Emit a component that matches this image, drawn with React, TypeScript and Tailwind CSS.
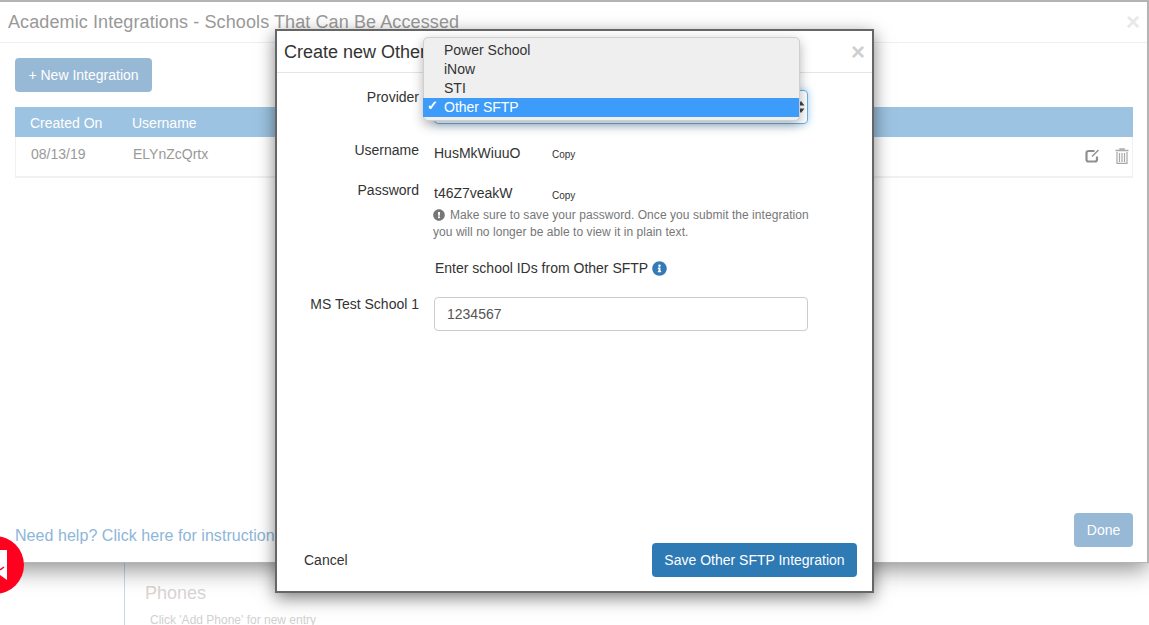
import { FaExclamationCircle, FaInfoCircle } from "react-icons/fa";

const providers = ["Power School", "iNow", "STI", "Other SFTP"];

function EditIcon() {
  return (
    <svg width="15" height="15" viewBox="0 0 15 15" fill="none" className="text-[#8f8f8f]">
      <path d="M9.5 3H3.5A2 2 0 0 0 1.5 5v6.5a2 2 0 0 0 2 2H10a2 2 0 0 0 2-2V8.5" stroke="currentColor" strokeWidth="2.2" />
      <path d="M7 8.5 13.5 2" stroke="currentColor" strokeWidth="1.5" />
    </svg>
  );
}

function TrashIcon() {
  return (
    <svg width="14" height="16" viewBox="0 0 14 16" fill="none" className="text-[#a8a8a8]">
      <path d="M5 2V.8H9V2M0.5 2.5H13.5" stroke="currentColor" strokeWidth="1.3" />
      <path d="M2 4V15.3H12V4" stroke="currentColor" strokeWidth="1.2" />
      <path d="M4.5 5V14M7 5V14M9.5 5V14" stroke="currentColor" strokeWidth="1.2" />
    </svg>
  );
}

function Field({ label, value, top, copyTop }: { label: string; value: string; top: string; copyTop: string }) {
  return (
    <div className={`flex ${top}`}>
      <div className="w-[142px] text-right text-sm leading-5 text-[#333]">{label}</div>
      <div className="ml-[15px] w-[118px] pt-[3px] text-sm leading-5 text-[#333]">{value}</div>
      <div className={`${copyTop} text-[10px] leading-5 text-[#333]`}>Copy</div>
    </div>
  );
}

export default function App() {
  return (
    <div className="relative h-[625px] w-[1149px] overflow-hidden bg-white font-['Liberation_Sans',Arial,sans-serif]">
      {/* back modal */}
      <div className="relative z-10 flex h-[563px] flex-col border-t-2 border-r-2 border-b border-[#b4b4b4] bg-white shadow-[0_6px_22px_rgba(0,0,0,0.45)]">
        <div className="flex h-[41px] shrink-0 items-center justify-between border-b border-[#efefef] pr-[7px] pl-2">
          <h1 className="text-lg leading-5 tracking-[0.1px] text-[#999]">Academic Integrations - Schools That Can Be Accessed</h1>
          <span className="text-[24px] leading-none font-bold text-[#e8e8e8]">×</span>
        </div>
        <div className="flex flex-1 flex-col pt-[15px] pr-[14px] pl-[15px]">
          <button className="h-[34px] w-[137px] rounded bg-[#97b9d6] text-sm font-normal text-white">+ New Integration</button>
          <div className="mt-[15px] flex h-[30px] items-center bg-[#9cc3e1] pt-[2px] text-sm text-white">
            <span className="ml-[15px] w-[102px]">Created On</span>
            <span>Username</span>
          </div>
          <div className="flex h-[41px] items-center border-x border-b-2 border-[#f1f1f1] pb-[6px] text-sm text-[#999]">
            <span className="ml-[15px] w-[102px]">08/13/19</span>
            <span>ELYnZcQrtx</span>
            <div className="mt-[4px] mr-[3px] ml-auto flex items-center gap-[15px]">
              <EditIcon />
              <TrashIcon />
            </div>
          </div>
          <div className="mt-auto flex items-start justify-between pb-[15px]">
            <a className="mt-[13px] text-base leading-5 tracking-[0.05px] text-[#8db6d8]">Need help? Click here for instructions</a>
            <button className="h-[34px] w-[59px] rounded bg-[#97b9d6] text-sm text-white">Done</button>
          </div>
        </div>
      </div>

      {/* page behind the modals */}
      <div className="ml-[124px] h-[62px] border-l border-[#c4d9ea] pt-5 pl-5">
        <div className="text-lg leading-5 text-[#d8d4d2]">Phones</div>
        <div className="mt-[9px] ml-[5px] text-xs leading-4 text-[#d0d0d0]">Click 'Add Phone' for new entry</div>
      </div>

      {/* chat bubble */}
      <div className="absolute top-[536px] left-[-34px] z-20 flex h-[58px] w-[58px] items-center justify-end rounded-full bg-[#ff001f] pr-[17px]">
        <svg width="7" height="30" viewBox="0 0 7 30">
          <path d="M0 0H7V30L0 25Z" fill="#fff" />
          <path d="M0 20 4 17" stroke="#ff001f" strokeWidth="1.5" />
        </svg>
      </div>

      {/* create integration modal */}
      <div className="absolute top-[29px] left-[275px] z-30 flex h-[564px] w-[599px] flex-col border-2 border-[#666] bg-white shadow-[0_5px_16px_rgba(0,0,0,0.5)]">
        <div className="flex h-[42px] shrink-0 items-center justify-between border-b border-[#e5e5e5] pr-[7px] pl-[7px]">
          <h2 className="text-lg leading-5 text-[#333]">Create new Other SFTP Integration</h2>
          <span className="text-[24px] leading-none font-bold text-[#cfcfcf]">×</span>
        </div>

        <div className="flex-1">
          <div className="flex pt-[14px]">
            <div className="w-[142px] text-right text-sm leading-5 text-[#333]">Provider</div>
            <div className="mt-[3px] ml-[15px] flex h-[34px] w-[374px] items-center justify-end rounded border border-[#66afe9] pr-[2px] shadow-[0_0_8px_rgba(102,175,233,0.6)]">
              <svg width="8" height="14" viewBox="0 0 8 14">
                <path d="M4 1 7.5 5.5H.5ZM4 13 .5 8.5H7.5Z" fill="#444" />
              </svg>
            </div>
          </div>
          <Field label="Username" value="HusMkWiuuO" top="mt-4" copyTop="pt-[5px]" />
          <Field label="Password" value="t46Z7veakW" top="mt-[15px]" copyTop="pt-[6px]" />
          <div className="mt-px ml-[156px] w-[390px] text-xs leading-[17px] tracking-[0.05px] text-[#777]">
            <FaExclamationCircle className="mr-[5px] mb-[2px] inline h-3 w-3 text-[#777]" />
            Make sure to save your password. Once you submit the integration you will no longer be able to view it in plain text.
          </div>
          <div className="mt-[17px] ml-[158px] flex items-center gap-1 text-sm leading-5 text-[#333]">
            Enter school IDs from Other SFTP
            <FaInfoCircle className="h-[15px] w-[15px] text-[#337ab7]" />
          </div>
          <div className="mt-[19px] flex">
            <div className="mt-[-3px] w-[142px] text-right text-sm leading-5 text-[#333]">MS Test School 1</div>
            <div className="ml-[15px] flex h-[34px] w-[374px] items-center rounded border border-[#ccc] px-3 text-sm text-[#555]">1234567</div>
          </div>
        </div>

        <div className="flex shrink-0 items-center justify-between pr-[15px] pb-[14px] pl-[27px]">
          <button className="text-sm text-[#333]">Cancel</button>
          <button className="h-[34px] w-[205px] rounded bg-[#2e7ab5] text-sm text-white">Save Other SFTP Integration</button>
        </div>

        {/* native select menu, open */}
        <div className="absolute top-[6px] left-[146px] w-[377px] rounded-[5px] border border-[#cfcfcf] bg-[#efefef] pt-[3px] pb-[3px] shadow-[0_4px_12px_rgba(0,0,0,0.3)]">
          {providers.map((p) => (
            <div
              key={p}
              className={`flex h-[19px] items-center pb-[2px] pl-[20px] text-sm ${p === "Other SFTP" ? "relative ml-[-1px] pl-[21px] bg-[#3d9bfa] text-white" : "text-[#333]"}`}
            >
              {p === "Other SFTP" && <span className="absolute left-[4px] text-[13px] font-bold">✓</span>}
              {p}
            </div>
          ))}
        </div>
      </div>
    </div>
  );
}
